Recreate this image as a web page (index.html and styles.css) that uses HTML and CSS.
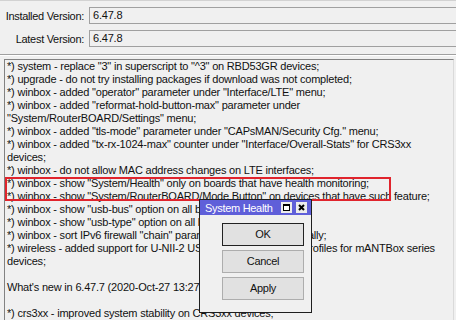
FILE: index.html
```html
<!DOCTYPE HTML>
<html>
<head>
	<title>Check For Updates</title>
	<link rel="stylesheet" href="styles.css">
</head>
<body>
	<div class="top-rule"></div>

	<div class="versions">
		<div class="row">
			<span class="label">Installed Version:</span>
			<span class="field">6.47.8</span>
		</div>
		<div class="row">
			<span class="label">Latest Version:</span>
			<span class="field">6.47.8</span>
		</div>
	</div>

	<div class="sep"></div>

	<div class="log">
		<div class="line">*) system - replace "3" in superscript to "^3" on RBD53GR devices;</div>
		<div class="line">*) upgrade - do not try installing packages if download was not completed;</div>
		<div class="line">*) winbox - added "operator" parameter under "Interface/LTE" menu;</div>
		<div class="line">*) winbox - added "reformat-hold-button-max" parameter under</div>
		<div class="line">"System/RouterBOARD/Settings" menu;</div>
		<div class="line">*) winbox - added "tls-mode" parameter under "CAPsMAN/Security Cfg." menu;</div>
		<div class="line">*) winbox - added "tx-rx-1024-max" counter under "Interface/Overall-Stats" for CRS3xx</div>
		<div class="line">devices;</div>
		<div class="line">*) winbox - do not allow MAC address changes on LTE interfaces;</div>
		<div class="line">*) winbox - show "System/Health" only on boards that have health monitoring;</div>
		<div class="line">*) winbox - show "System/RouterBOARD/Mode Button" on devices that have such feature;</div>
		<div class="line">*) winbox - show "usb-bus" option on all boards with USB;</div>
		<div class="line">*) winbox - show "usb-type" option on all boards with USB;</div>
		<div class="line">*) winbox - sort IPv6 firewall "chain" parameter values alphabetically;</div>
		<div class="line">*) wireless - added support for U-NII-2 US and Canada country profiles for mANTBox series</div>
		<div class="line">devices;</div>
		<div class="line">&nbsp;</div>
		<div class="line">What's new in 6.47.7 (2020-Oct-27 13:27):</div>
		<div class="line">&nbsp;</div>
		<div class="line">*) crs3xx - improved system stability on CRS3xx devices;</div>
	</div>

	<!-- red highlight drawn over the log -->
	<div class="mark"></div>

	<div class="dialog">
		<div class="title">
			<span>System Health</span>
			<span class="title-btns">
				<svg width="11" height="11" viewBox="0 0 11 11">
					<rect x="0" y="0" width="11" height="11" fill="#ececec"/>
					<rect x="2.5" y="2.5" width="6" height="6" fill="#fff" stroke="#000"/>
					<rect x="2" y="2" width="7" height="2" fill="#000"/>
				</svg>
				<svg width="11" height="11" viewBox="0 0 11 11">
					<rect x="0" y="0" width="11" height="11" fill="#ececec"/>
					<path d="M3 3 L8 8 M8 3 L3 8" stroke="#000" stroke-width="2"/>
				</svg>
			</span>
		</div>
		<div class="buttons">
			<div class="btn default">OK</div>
			<div class="btn">Cancel</div>
			<div class="btn">Apply</div>
		</div>
	</div>
</body>
</html>
```

FILE: styles.css
```css
body {
	margin: 0;
	width: 456px;
	height: 320px;
	overflow: hidden;
	position: relative;
	background-color: #f0f0f0;
	font-family: "Liberation Sans", Arial, sans-serif;
	font-size: 11px;
	letter-spacing: -0.2px;
	color: #111;
}

.top-rule {
	border-top: 1px solid #d2d2d2;
}

.versions {
	display: flex;
	flex-direction: column;
	gap: 6px;
	padding-top: 6px;
}

.row {
	display: grid;
	grid-template-columns: 84px 1fr;
	column-gap: 5px;
	align-items: center;
}

.label {
	text-align: right;
	letter-spacing: -0.3px;
}

.field {
	box-sizing: border-box;
	height: 17px;
	line-height: 15px;
	padding-left: 3px;
	margin-right: -10px;
	border: 1px solid #a0a0a0;
}

.sep {
	margin-top: 7px;
	border-top: 1px solid #a0a0a0;
	border-bottom: 1px solid #fff;
}

.log {
	margin: 3px 0 0 4px;
	width: 446px;
	height: 260px;
	padding-left: 2px;
	border-top: 1px solid #828282;
	border-left: 1px solid #828282;
	border-right: 1px solid #dadada;
	line-height: 13px;
	overflow: hidden;
}

.line {
	white-space: pre;
}

.mark {
	position: absolute;
	left: 5px;
	top: 177px;
	width: 386px;
	height: 24px;
	box-sizing: border-box;
	border: 2px solid #e0242c;
}

.dialog {
	position: absolute;
	left: 199px;
	top: 199px;
	width: 113px;
	height: 114px;
	box-sizing: border-box;
	border: 1px solid #1e1e1e;
	background-color: #f0f0f0;
	letter-spacing: -0.3px;
}

.title {
	height: 15px;
	display: flex;
	align-items: center;
	justify-content: space-between;
	padding: 0 4px 0 5px;
	background-color: #5f5fd9;
	color: #fff;
}

.title-btns {
	display: flex;
	gap: 4px;
}

.title-btns svg {
	display: block;
}

.buttons {
	display: flex;
	flex-direction: column;
	gap: 4px;
	padding: 8px 0 0 22px;
}

.btn {
	box-sizing: border-box;
	width: 82px;
	height: 23px;
	line-height: 21px;
	text-align: center;
	background-color: #e1e1e1;
	border: 1px solid #adadad;
}

.btn.default {
	border-color: #222;
}
```
